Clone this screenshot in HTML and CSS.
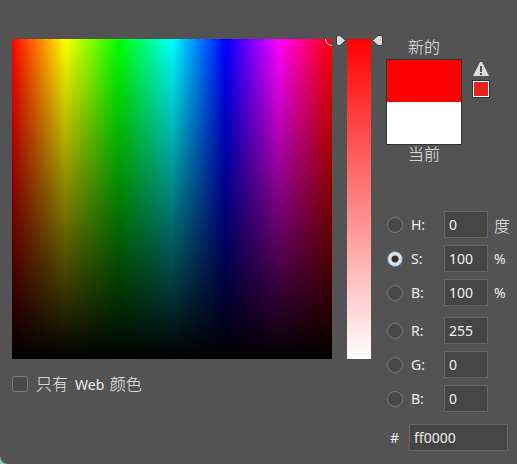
FILE: index.html
```html
<!DOCTYPE html>
<html lang="zh-CN">
<head>
<meta charset="utf-8">
<meta name="viewport" content="width=device-width, initial-scale=1">
<title>拾色器</title>
<link rel="stylesheet" href="styles.css">
</head>
<body>
<main class="picker">
  <section class="spectrum">
    <div class="field"><span class="marker"></span></div>
    <label class="web-only"><input type="checkbox" class="check"><span class="web-text">只有&nbsp; <span class="latin">Web</span> 颜色</span></label>
  </section>

  <div class="slider">
    <input type="range" class="track" min="0" max="100" value="100" aria-label="S">
    <svg class="handles" viewBox="0 0 48 12" aria-hidden="true">
      <path d="M1.500 2.500Q1.500 0.500 3.500 0.500H5L10.500 5.500L5 10.500H3.500Q1.500 10.500 1.500 8.500Z"/>
      <path d="M47.500 2.500Q47.500 0.500 45.500 0.500H43L37.500 5.500L43 10.500H45.500Q47.500 10.500 47.500 8.500Z"/>
    </svg>
  </div>

  <section class="values">
    <div class="preview">
      <div class="compare">
        <span class="caption">新的</span>
        <div class="swatches"><div class="new"></div><div class="current"></div></div>
        <span class="caption current-caption">当前</span>
      </div>
      <div class="warning">
        <svg class="alert" viewBox="0 0 16 16" aria-hidden="true">
          <path class="sign" d="M7 1H9L16 15H0Z"/>
          <path class="mark" d="M7 5H9V11H7ZM7 12H9V14H7Z"/>
        </svg>
        <button class="gamut" type="button" aria-label="选择色域内颜色"></button>
      </div>
    </div>

    <form class="channels">
      <div class="row"><input type="radio" name="channel" id="c-h" class="radio"><label for="c-h">H:</label><input type="text" class="box" value="0" aria-label="H"><span class="unit degree">度</span></div>
      <div class="row"><input type="radio" name="channel" id="c-s" class="radio" checked><label for="c-s">S:</label><input type="text" class="box" value="100" aria-label="S"><span class="unit">%</span></div>
      <div class="row"><input type="radio" name="channel" id="c-v" class="radio"><label for="c-v">B:</label><input type="text" class="box" value="100" aria-label="B"><span class="unit">%</span></div>
      <div class="row group"><input type="radio" name="channel" id="c-r" class="radio"><label for="c-r">R:</label><input type="text" class="box" value="255" aria-label="R"></div>
      <div class="row"><input type="radio" name="channel" id="c-g" class="radio"><label for="c-g">G:</label><input type="text" class="box" value="0" aria-label="G"></div>
      <div class="row"><input type="radio" name="channel" id="c-b" class="radio"><label for="c-b">B:</label><input type="text" class="box" value="0" aria-label="B"></div>
      <div class="hex"><label for="hex">#</label><input type="text" id="hex" class="box" value="ff0000"></div>
    </form>
  </section>
</main>
</body>
</html>
```
FILE: styles.css
```css
* {
  box-sizing: border-box;
}

body {
  margin: 0;
  background: #7fcdb9;
  color: #ececec;
  font: 14px/20px "Noto Sans", "Noto Sans CJK SC", sans-serif;
}

input,
button {
  margin: 0;
  font: inherit;
  color: inherit;
}

.picker {
  display: grid;
  grid-template-columns: minmax(0, 1fr) 48px 125px;
  align-items: start;
  min-height: 100vh;
  padding: 39px 9px 12px 12px;
  background: #535353;
  border-bottom-left-radius: 8px;
}

.spectrum {
  margin-right: 3px;
}

.field {
  position: relative;
  aspect-ratio: 1;
  overflow: hidden;
  background:
    linear-gradient(to bottom, transparent, #000),
    linear-gradient(to right, #f00, #ff0, #0f0, #0ff, #00f, #f0f, #f00);
}

.marker {
  position: absolute;
  top: -7px;
  right: -7px;
  width: 14px;
  height: 14px;
  border: 1px solid #fff;
  border-radius: 50%;
}

.web-only {
  display: flex;
  align-items: center;
  gap: 8px;
  margin-top: 13px;
}

.web-text {
  font: 300 16px/22px "Noto Sans CJK SC", sans-serif;
}

.latin {
  margin-right: 2px;
  font: 14px/20px "Noto Sans", sans-serif;
}

.check {
  appearance: none;
  width: 16px;
  height: 16px;
  border: 1px solid #7c7c7c;
  border-radius: 3px;
  background: #4b4b4b;
}

.slider {
  position: relative;
  display: flex;
  justify-content: center;
  height: 100%;
  max-height: 320px;
}

.track {
  appearance: none;
  writing-mode: vertical-lr;
  direction: rtl;
  width: 24px;
  height: 100%;
  background: linear-gradient(to bottom, #f00, #fff);
}

.track::-webkit-slider-thumb {
  appearance: none;
  width: 24px;
  height: 2px;
  background: transparent;
}

.handles {
  position: absolute;
  top: -4px;
  left: 0;
  width: 48px;
  height: 12px;
  fill: #dcdcdc;
  stroke: #383838;
  pointer-events: none;
}

.values {
  padding-left: 3px;
}

.preview {
  display: flex;
  gap: 10px;
  height: 172px;
}

.compare {
  width: 76px;
  margin-top: -3px;
  text-align: center;
}

.caption {
  display: block;
  height: 23px;
  font: 300 16px/20px "Noto Sans CJK SC", sans-serif;
}

.current-caption {
  line-height: 16px;
}

.swatches {
  height: 86px;
  border: 1px solid #323232;
}

.new,
.current {
  height: 50%;
}

.new {
  background: #f00;
}

.current {
  background: #fff;
}

.warning {
  display: flex;
  flex-direction: column;
  align-items: center;
  gap: 3px;
  margin-top: 22px;
}

.alert {
  width: 16px;
  height: 16px;
}

.sign {
  fill: #dcdcdc;
}

.mark {
  fill: #535353;
}

.gamut {
  width: 18px;
  height: 18px;
  padding: 0;
  border: 1px solid #333;
  background: #e8211d;
  box-shadow: inset 0 0 0 1px #fff;
}

.channels {
  padding-left: 1px;
}

.row {
  display: grid;
  grid-template-columns: 16px 25px 44px 1fr;
  column-gap: 8px;
  align-items: center;
  height: 27px;
  margin-bottom: 7px;
}

.group {
  margin-top: 11px;
}

.radio {
  appearance: none;
  width: 16px;
  height: 16px;
  border: 1px solid #7c7c7c;
  border-radius: 50%;
  background: #484848;
}

.radio:checked {
  border: 1px solid #4b88d8;
  background: radial-gradient(circle, #303030 3px, #dedede 4px);
}

.box {
  width: 100%;
  min-width: 0;
  height: 27px;
  padding: 0 4px;
  border: 1px solid #666;
  border-radius: 0;
  background: #454545;
  color: #f0f0f0;
}

.unit {
  margin-left: -2px;
  white-space: nowrap;
}

.degree {
  font: 300 16px/20px "Noto Sans CJK SC", sans-serif;
}

.hex {
  display: grid;
  grid-template-columns: 14px 1fr;
  gap: 8px;
  align-items: center;
  margin-top: 12px;
}

.hex label {
  padding-left: 3px;
}
```
